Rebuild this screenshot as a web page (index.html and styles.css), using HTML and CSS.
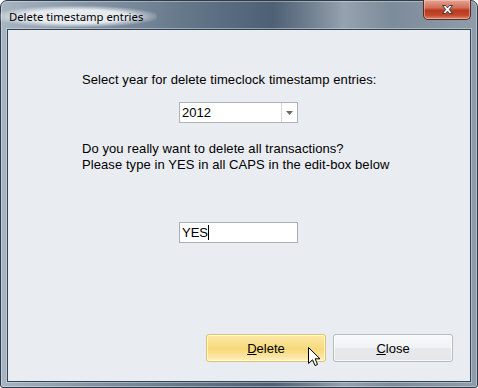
FILE: index.html
```html
<!DOCTYPE html>
<html lang="en">
<head>
    <meta charset="UTF-8">
    <title>Delete timestamp entries</title>
    <link rel="stylesheet" href="styles.css">
</head>
<body>

    <div class="window">
        <div class="titlebar">
            <span class="title">Delete timestamp entries</span>
            <div class="close-btn">
                <svg width="13" height="11" viewBox="0 0 13 11">
                    <path d="M1.5 1.5 L4.5 1.5 L6.5 3.8 L8.5 1.5 L11.5 1.5 L8.3 5.5 L11.5 9.5 L8.5 9.5 L6.5 7.2 L4.5 9.5 L1.5 9.5 L4.7 5.5 Z" fill="#fff" stroke="#3b3b3b" stroke-width="1" stroke-linejoin="round"/>
                </svg>
            </div>
        </div>

        <div class="content">
            <p class="label first">Select year for delete timeclock timestamp entries:</p>

            <div class="combo">
                <span class="combo-value">2012</span>
                <span class="combo-arrow">
                    <svg width="7" height="4" viewBox="0 0 7 4"><path d="M0 0 H7 L3.5 4 Z" fill="#6a6a6a"/></svg>
                </span>
            </div>

            <p class="label second">Do you really want to delete all transactions?<br>Please type in YES in all CAPS in the edit-box below</p>

            <div class="editbox">YES<span class="caret"></span></div>

            <div class="buttons">
                <button class="btn btn-default"><u>D</u>elete</button>
                <button class="btn"><u>C</u>lose</button>
            </div>

            <!-- mouse pointer hovering the Delete button -->
            <svg class="cursor" width="13" height="20" viewBox="0 0 13 20">
                <path d="M0.5 0.5 L0.5 16.5 L4.5 12.8 L7 18.5 L9.5 17.5 L7.2 11.8 L12 11.8 Z" fill="#fff" stroke="#000" stroke-width="1" stroke-linejoin="miter"/>
            </svg>
        </div>
    </div>

</body>
</html>
```

FILE: styles.css
```css
* {
    margin: 0;
    padding: 0;
    box-sizing: border-box;
}
body {
    width: 478px;
    height: 388px;
    background-color: #fff;
    font-family: 'Liberation Sans', Arial, sans-serif;
    font-size: 13px;
    color: #000;
}
.window {
    width: 478px;
    height: 388px;
    display: flex;
    flex-direction: column;
    border: 1px solid #2e3b48;
    border-radius: 7px 7px 3px 3px;
    padding: 0 6px 5px 6px;
    background: linear-gradient(90deg, #a7b4c1 0%, #8595a5 18%, #66798b 38%, #4d6074 57%, #6c7c8c 64%, #95a2af 72%, #7d8c9a 82%, #8f9ca9 100%);
    box-shadow: inset 0 0 0 1px rgba(255, 255, 255, 0.35);
}
.titlebar {
    height: 28px;
    display: flex;
    justify-content: space-between;
    align-items: flex-start;
}
.title {
    font-family: 'Noto Sans', 'Segoe UI', sans-serif;
    font-size: 11.3px;
    color: #000;
    margin: 5px 0 0 -12px;
    padding: 3px 14px;
    border-radius: 12px;
    background: radial-gradient(ellipse at center, rgba(236, 240, 244, 0.95) 45%, rgba(236, 240, 244, 0) 75%);
}
.close-btn {
    width: 48px;
    height: 20px;
    margin-top: -1px;
    display: flex;
    align-items: center;
    justify-content: center;
    border: 1px solid #5a2b25;
    border-top: none;
    border-radius: 0 0 5px 5px;
    background: linear-gradient(180deg, #e6a595 0%, #d0705a 40%, #b93a21 55%, #c4472b 80%, #de8a6f 100%);
    box-shadow: inset 0 0 0 1px rgba(255, 220, 210, 0.45);
}
.content {
    flex: 1;
    position: relative;
    display: flex;
    flex-direction: column;
    align-items: flex-start;
    padding: 0 17px 19px 74px;
    background-color: #e9ecf1;
    border: 1px solid #34434f;
    box-shadow: 0 0 0 1px rgba(220, 230, 238, 0.45);
}
.label {
    line-height: 16px;
    letter-spacing: 0.08px;
}
.label.first {
    margin-top: 42px;
}
.label.second {
    margin-top: 18px;
}
.combo {
    width: 119px;
    height: 21px;
    margin: 14px 0 0 97px;
    display: flex;
    background-color: #fff;
    border: 1px solid #adb1b8;
}
.combo-value {
    flex: 1;
    padding: 2px 0 0 2px;
}
.combo-arrow {
    width: 16px;
    display: flex;
    align-items: center;
    justify-content: center;
    border-left: 1px solid #d5d8dd;
}
.editbox {
    width: 119px;
    height: 21px;
    margin: 49px 0 0 97px;
    display: flex;
    align-items: flex-start;
    padding: 2px 0 0 2px;
    background-color: #fff;
    border: 1px solid #a9adb4;
}
.caret {
    width: 1px;
    height: 15px;
    background-color: #000;
}
.buttons {
    margin-top: auto;
    align-self: flex-end;
    display: flex;
    gap: 7px;
}
.btn {
    width: 120px;
    height: 28px;
    font-family: 'Liberation Sans', Arial, sans-serif;
    font-size: 13px;
    color: #000;
    border: 1px solid #b6bac1;
    border-radius: 3px;
    background: linear-gradient(180deg, #f8f9fb 0%, #f0f2f4 50%, #e7e9ec 51%, #e4e6ea 100%);
    box-shadow: inset 0 0 0 1px rgba(255, 255, 255, 0.7);
}
.btn-default {
    border-color: #e3c35a;
    background: linear-gradient(180deg, #fce9a8 0%, #f8dc83 45%, #f7d97b 55%, #fbe6a4 85%, #fdf2c9 100%);
}
.cursor {
    position: absolute;
    left: 300px;
    top: 317px;
}
```
